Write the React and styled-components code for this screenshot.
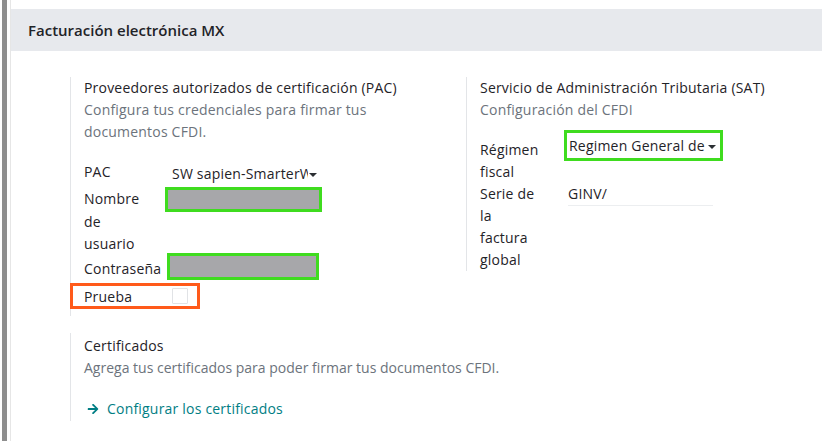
import React from 'react';
import styled, { createGlobalStyle } from 'styled-components';
import { FaArrowRight } from 'react-icons/fa';

const GlobalStyle = createGlobalStyle`
  body {
    margin: 0;
    background: #fff;
    font-family: "Open Sans", "Noto Sans", sans-serif;
    font-size: 14px;
    letter-spacing: 0.2px;
    color: #212529;
  }
`;

const Shell = styled.div`
  display: flex;
  min-height: 441px;
  padding-left: 2px;
`;

const SideBar = styled.div`
  width: 5px;
  flex-shrink: 0;
  background: #8e8e8e;
`;

const Panel = styled.div`
  flex: 1;
  margin-left: 3px;
  border-left: 1px solid #e6e6e6;
  padding: 9px 7px 0 0;
`;

const Header = styled.div`
  height: 42px;
  display: flex;
  align-items: center;
  padding-left: 17px;
  background: #e7e9ed;
`;

const Title = styled.h2`
  margin: 0;
  font-size: 15px;
  font-weight: 600;
  letter-spacing: 0;
  color: #1f2328;
`;

const Body = styled.div`
  padding: 26px 0 0 59px;
`;

const Columns = styled.div`
  display: grid;
  grid-template-columns: 396px 1fr;
`;

const Setting = styled.div`
  border-left: 1px solid #e3e5e8;
  padding-left: 13px;
  padding-top: ${p => p.$padTop || 0}px;
  padding-bottom: ${p => p.$bottom || 0}px;
  margin-top: ${p => p.$top || 0}px;
  align-self: start;
  line-height: 22px;
`;

const SettingTitle = styled.div`
  color: #1f2328;
`;

const Help = styled.div`
  color: #6c737c;
  letter-spacing: ${p => (p.$tight ? 0 : 0.2)}px;
`;

const Fields = styled.div`
  margin-top: ${p => p.$top}px;
  display: flex;
  flex-direction: column;
`;

const Row = styled.div`
  display: grid;
  grid-template-columns: ${p => p.$label}px 1fr;
  align-items: start;
  min-height: ${p => p.$height || 22}px;
`;

const Label = styled.div`
  padding-top: ${p => p.$pad || 0}px;
  padding-right: ${p => p.$right || 0}px;
  line-height: ${p => p.$line || 22}px;
  color: #1f2328;
`;

const Select = styled.div`
  display: flex;
  align-items: center;
  width: ${p => p.$width}px;
  height: ${p => p.$height}px;
  padding-left: ${p => p.$pad}px;
  box-sizing: border-box;
  border: ${p => (p.$outline ? '3px solid #3fdc1f' : 'none')};
  color: #1f2328;
`;

const SelectText = styled.span`
  flex: 1;
  overflow: hidden;
  white-space: nowrap;
`;

const Caret = styled.span`
  width: 0;
  height: 0;
  margin: 2px 4px 0 1px;
  border-left: 4px solid transparent;
  border-right: 4px solid transparent;
  border-top: 4px solid #2b2f33;
`;

const Masked = styled.div`
  width: ${p => p.$width}px;
  height: ${p => p.$height}px;
  margin-left: ${p => p.$left || 0}px;
  margin-top: ${p => p.$top || 0}px;
  box-sizing: border-box;
  border: 3px solid #3fdc1f;
  background: #a7a7aa;
`;

const TextValue = styled.div`
  width: 145px;
  margin-left: 4px;
  border-bottom: 1px solid #eceef0;
  color: #1f2328;
`;

const TestRow = styled.div`
  display: flex;
  align-items: center;
  width: 130px;
  height: 26px;
  box-sizing: border-box;
  margin: 1px 0 0 -14px;
  padding-left: 11px;
  border: 3px solid #ff5a1a;
`;

const TestLabel = styled.span`
  width: 88px;
  padding-top: 2px;
  color: #1f2328;
`;

const Checkbox = styled.span`
  width: 14px;
  height: 14px;
  border: 1px solid #e1e3e6;
  border-radius: 1px;
  background: #fff;
`;

const Link = styled.a`
  display: inline-flex;
  align-items: center;
  gap: 8px;
  margin-top: 19px;
  padding-left: 3px;
  color: #017e84;
  text-decoration: none;
  cursor: pointer;
`;

export default function App() {
  return (
    <>
      <GlobalStyle />
      <Shell>
        <SideBar />
        <Panel>
          <Header>
            <Title>Facturación electrónica MX</Title>
          </Header>
          <Body>
            <Columns>
              <Setting $bottom={7}>
                <SettingTitle>Proveedores autorizados de certificación (PAC)</SettingTitle>
                <Help>Configura tus credenciales para firmar tus<br />documentos CFDI.</Help>
                <Fields $top={18}>
                  <Row $label={81} $height={27}>
                    <Label>PAC</Label>
                    <Select $width={156} $height={26} $pad={7}>
                      <SelectText>SW sapien-SmarterWeb</SelectText>
                      <Caret />
                    </Select>
                  </Row>
                  <Row $label={81}>
                    <Label $right={14} $line={22.5}>Nombre de usuario</Label>
                    <Masked $width={157} $height={25} $top={-1} />
                  </Row>
                  <Row $label={81} $height={26}>
                    <Label $right={14} $pad={2}>Contraseña</Label>
                    <Masked $width={152} $height={27} $left={2} $top={-3} />
                  </Row>
                  <TestRow>
                    <TestLabel>Prueba</TestLabel>
                    <Checkbox />
                  </TestRow>
                </Fields>
              </Setting>
              <Setting>
                <SettingTitle>Servicio de Administración Tributaria (SAT)</SettingTitle>
                <Help>Configuración del CFDI</Help>
                <Fields $top={9}>
                  <Row $label={84}>
                    <Label $pad={9} $right={22}>Régimen fiscal</Label>
                    <Select $width={159} $height={31} $pad={2} $outline>
                      <SelectText>Regimen General de</SelectText>
                      <Caret />
                    </Select>
                  </Row>
                  <Row $label={84}>
                    <Label $right={22}>Serie de la factura global</Label>
                    <TextValue>GINV/</TextValue>
                  </Row>
                </Fields>
              </Setting>
            </Columns>
            <Setting $top={17} $padTop={2}>
              <SettingTitle>Certificados</SettingTitle>
              <Help $tight>Agrega tus certificados para poder firmar tus documentos CFDI.</Help>
              <Link>
                <FaArrowRight size={12} />
                Configurar los certificados
              </Link>
            </Setting>
          </Body>
        </Panel>
      </Shell>
    </>
  );
}
